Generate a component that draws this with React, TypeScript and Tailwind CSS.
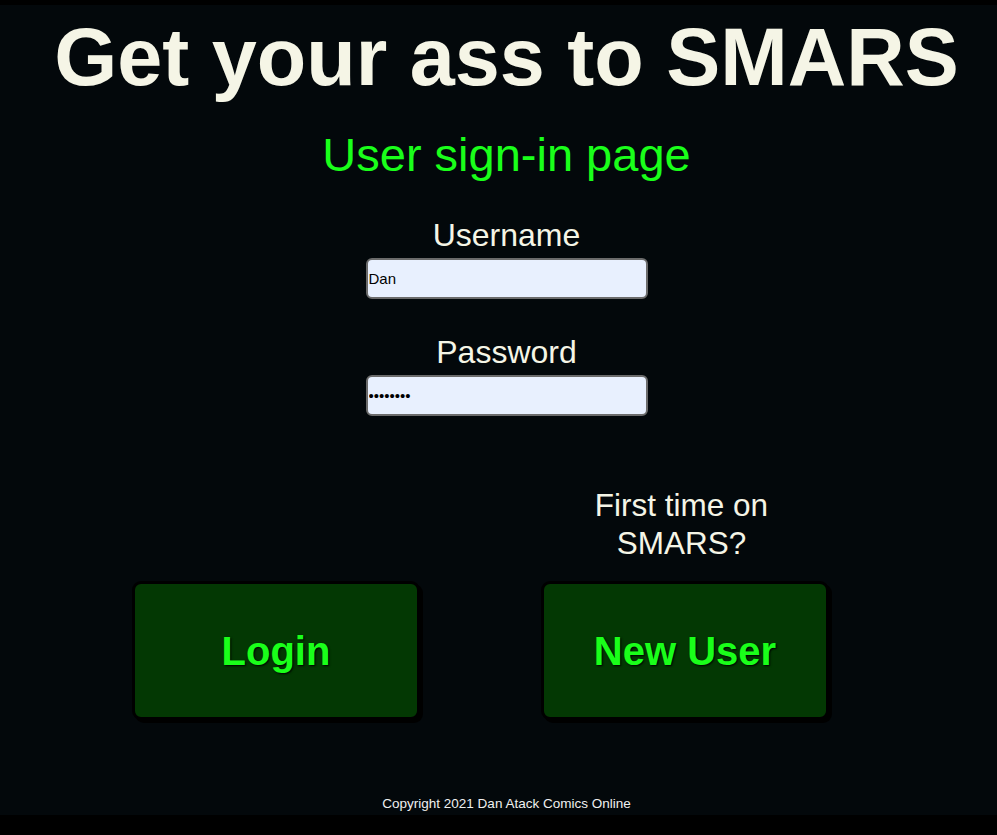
import React from "react";

export default function App() {
  const font = { fontFamily: '"Liberation Sans", Arial, sans-serif' };
  const btn =
    "flex h-[139px] w-[288px] items-center justify-center rounded-[9px] border-[3px] border-black bg-[#033803] text-[40px] font-bold text-[#1aff1a] shadow-[3px_3px_0_#000] [text-shadow:1px_1px_2px_#000]";
  return (
    <div className="min-h-[835px] bg-black pt-[5px]" style={font}>
      <div className="flex h-[810px] flex-col items-center bg-[#03080b] pl-[16px]">
        <h1 className="mt-[12px] text-[81px] font-bold leading-none text-[#f5f5e6] whitespace-nowrap">
          Get your ass to SMARS
        </h1>
        <h2 className="mt-[33px] text-[47px] leading-none text-[#1aff1a]">User sign-in page</h2>
        <label className="mt-[41px] text-[32px] leading-none text-[#f5f5e6]">Username</label>
        <input
          readOnly
          value="Dan"
          className="mt-[7px] h-[41px] w-[282px] rounded-[6px] border-2 border-[#6b6b6b] bg-[#e8f0fe] px-[1px] text-[15px] text-black outline-none"
          style={font}
        />
        <label className="mt-[37px] text-[32px] leading-none text-[#f5f5e6]">Password</label>
        <input
          readOnly
          type="password"
          value="password"
          className="mt-[7px] h-[41px] w-[282px] rounded-[6px] border-2 border-[#6b6b6b] bg-[#e8f0fe] px-[1px] text-[15px] text-black outline-none"
          style={font}
        />
        <div className="mt-[70px] flex w-full items-end pl-[116px]">
          <button className={btn}>Login</button>
          <div className="ml-[121px] flex w-[288px] flex-col items-center">
            <p className="pr-[7px] text-center text-[31.5px] leading-[38px] text-[#f5f5e6]">
              First time on
              <br />
              SMARS?
            </p>
            <button className={"mt-[19px] " + btn}>New User</button>
          </div>
        </div>
        <footer className="mt-auto pb-[5px] text-[13.5px] leading-none text-[#f0f0f0]">
          Copyright 2021 Dan Atack Comics Online
        </footer>
      </div>
    </div>
  );
}
